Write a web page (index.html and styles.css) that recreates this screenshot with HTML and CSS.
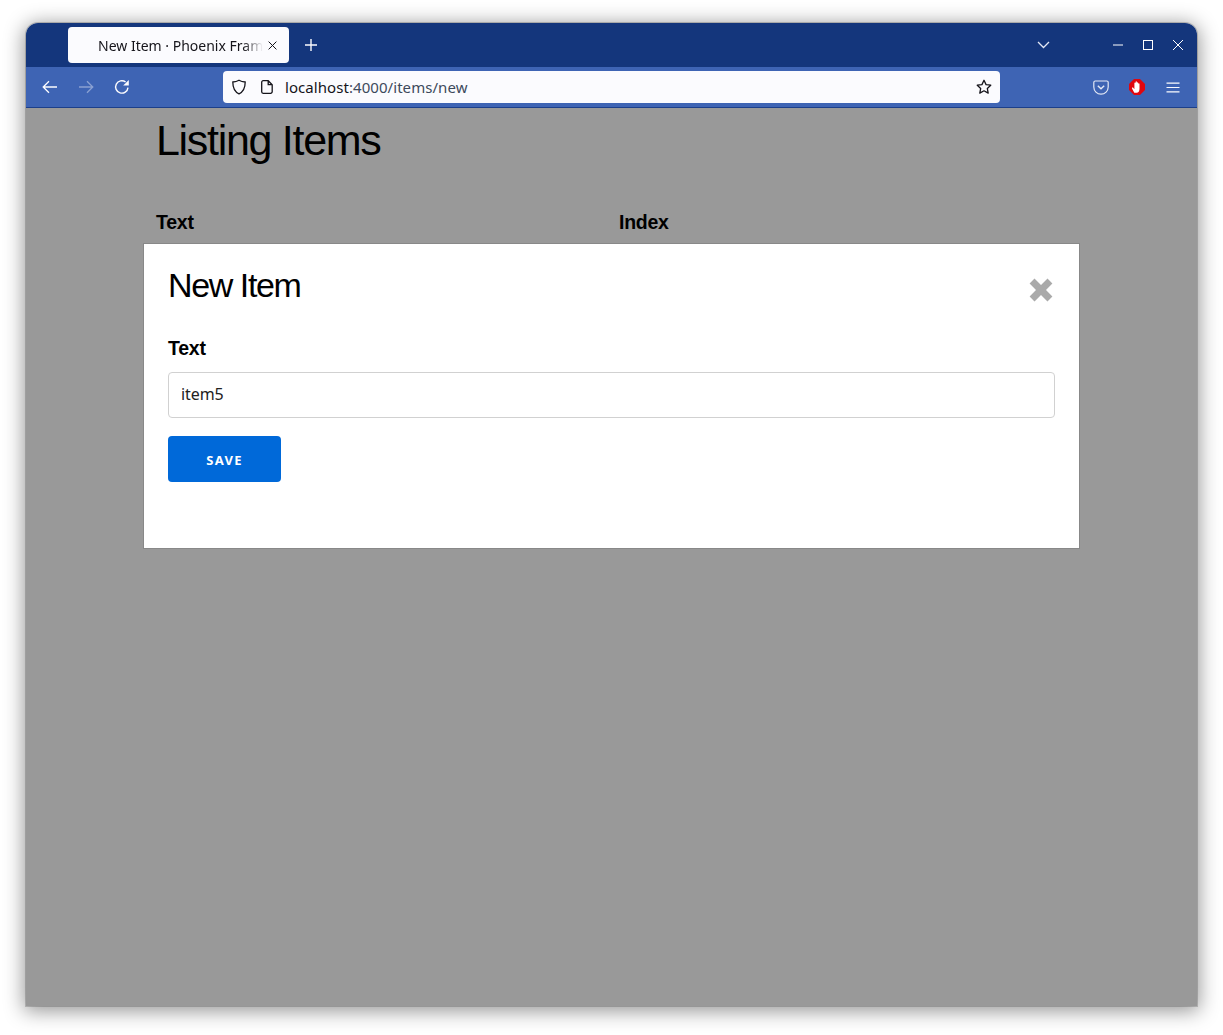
FILE: index.html
```html
<!DOCTYPE html>
<html lang="en">
<head>
<meta charset="utf-8">
<title>New Item · Phoenix Framework</title>
<link rel="stylesheet" href="styles.css">
</head>
<body>
<div class="window">
  <div class="titlebar">
    <div class="tab">
      <span class="tab-title">New Item · Phoenix Framework</span>
      <svg class="tab-close" width="9" height="9" viewBox="0 0 9 9"><path d="M.6 .6l7.800 7.800M8.400 .6l-7.800 7.800" stroke="#15141a" stroke-width="1" fill="none"/></svg>
    </div>
    <svg class="new-tab" width="12" height="12" viewBox="0 0 12 12"><path d="M6 0v12M0 6h12" stroke="#fbfbfe" stroke-width="1.4" fill="none"/></svg>
    <div class="title-spacer"></div>
    <svg class="list-tabs" width="13" height="8" viewBox="0 0 13 8"><path d="M1 1l5.500 5.500L12 1" stroke="#e3e8f5" stroke-width="1.300" fill="none"/></svg>
    <div class="win-controls">
      <svg width="10" height="2" viewBox="0 0 10 2"><path d="M0 1h10" stroke="#fff" stroke-width="1"/></svg>
      <svg width="10" height="10" viewBox="0 0 10 10"><rect x=".5" y=".5" width="9" height="9" stroke="#fff" fill="none"/></svg>
      <svg width="10" height="10" viewBox="0 0 10 10"><path d="M0 0l10 10M10 0L0 10" stroke="#fff" fill="none"/></svg>
    </div>
  </div>
  <div class="toolbar">
    <div class="nav">
      <svg width="16" height="14" viewBox="0 0 16 14"><path d="M15 7H1.500M7 1.200L1.200 7 7 12.800" stroke="#fbfbfe" stroke-width="1.300" fill="none"/></svg>
      <svg class="nav-off" width="16" height="14" viewBox="0 0 16 14"><path d="M1 7h13.500M9 1.200L14.800 7 9 12.800" stroke="#fbfbfe" stroke-width="1.300" fill="none"/></svg>
      <svg width="16" height="16" viewBox="0 0 16 16"><path d="M14 8.600A6.200 6.200 0 1 1 11.600 3" stroke="#fbfbfe" stroke-width="1.400" fill="none"/><path d="M14.800 1v5.600H9.200z" fill="#fbfbfe"/></svg>
    </div>
    <div class="urlbar">
      <svg class="shield" width="16" height="16" viewBox="0 0 16 16"><path d="M8 1.200c2 1.100 4 1.600 6.200 1.800 0 5.500-1.500 9.700-6.200 11.800C3.300 12.700 1.800 8.500 1.800 3 4 2.800 6 2.300 8 1.200z" stroke="#15141a" stroke-width="1.300" fill="none"/></svg>
      <svg class="page" width="12" height="14" viewBox="0 0 12 14"><path d="M2.200 .7h5l4 4v7a1.600 1.600 0 0 1-1.600 1.600H2.200A1.600 1.600 0 0 1 .7 11.700V2.200A1.500 1.500 0 0 1 2.200 .7zM7.200 .7v4h4" stroke="#15141a" stroke-width="1.300" fill="none"/></svg>
      <span class="url"><span class="host">localhost</span>:4000/items/new</span>
      <svg class="star" width="16" height="16" viewBox="0 0 16 16"><path d="M8 1.300l2.050 4.300 4.700.6-3.450 3.250.9 4.650L8 11.800l-4.200 2.300.9-4.650L1.250 6.200l4.700-.6z" stroke="#15141a" stroke-width="1.300" stroke-linejoin="round" fill="none"/></svg>
    </div>
    <div class="tools">
      <svg width="16" height="15" viewBox="0 0 16 15"><path d="M2.200 1h11.600A1.400 1.400 0 0 1 15.200 2.400V7a7.200 7.200 0 0 1-14.400 0V2.400A1.400 1.400 0 0 1 2.200 1z" stroke="#e3e8f5" stroke-width="1.200" fill="none"/><path d="M4.800 5.700L8 8.800l3.200-3.100" stroke="#e3e8f5" stroke-width="1.400" fill="none"/></svg>
      <svg width="16" height="16" viewBox="0 0 16 16"><path d="M5 0h6l5 5v6l-5 5H5l-5-5V5z" fill="#e0060f"/><path d="M5.300 13.800L3 9.500c-.4-.8.600-1.400 1.200-.7l1.200 1.500V4.200c0-.9 1.200-.9 1.200 0V2.900c0-.9 1.300-.9 1.300 0v1c0-.9 1.300-.9 1.300 0v1c0-.8 1.300-.8 1.300 0v4.800c0 2.300-1 4.100-2.900 4.100H7c-.8 0-1.300-.1-1.700 0z" fill="#fff"/></svg>
      <svg width="16" height="11" viewBox="0 0 16 11"><path d="M1.500 1.100h13M1.500 5.500h13M1.500 9.900h13" stroke="#fbfbfe" stroke-width="1.200"/></svg>
    </div>
  </div>
  <div class="viewport">
    <main class="page-content">
      <h1 class="page-title">Listing Items</h1>
      <div class="table-head">
        <span>Text</span>
        <span>Index</span>
      </div>
    </main>
    <div class="overlay">
      <section class="modal">
        <svg class="modal-close" width="24" height="24" viewBox="0 0 24 24"><path d="M5.500 0.600L12 7l6.500-6.400 4.900 4.900L17 12l6.400 6.500-4.900 4.900L12 17l-6.500 6.400-4.900-4.900L7 12 .6 5.500z" fill="#aaa"/></svg>
        <h2 class="modal-title">New Item</h2>
        <form class="form">
          <label class="label" for="text">Text</label>
          <input class="input" id="text" type="text" value="item5">
          <button class="save" type="button">SAVE</button>
        </form>
      </section>
    </div>
  </div>
</div>
</body>
</html>
```
FILE: styles.css
```css
* { box-sizing: border-box; }
html, body { margin: 0; height: 100%; background: #fff; }
body { padding: 23px 26px 29px; overflow: hidden; }
.window {
  height: 100%;
  display: flex;
  flex-direction: column;
  border-radius: 12px 12px 0 0;
  overflow: hidden;
  box-shadow: 0 0 0 1px rgba(0,0,0,.18), 0 3px 20px 2px rgba(0,0,0,.42);
  font-family: "Noto Sans", sans-serif;
}
.titlebar {
  height: 44px;
  flex: none;
  display: flex;
  align-items: center;
  background: #14367c;
  padding: 4px 0 0 42px;
}
.tab {
  width: 221px;
  height: 36px;
  background: #fbfbfe;
  border-radius: 4px;
  display: flex;
  align-items: center;
  padding: 0 12px 0 30px;
  gap: 5px;
  margin-top: -4px;
}
.tab-title {
  flex: 1;
  min-width: 0;
  font-size: 14px;
  color: #15141a;
  white-space: nowrap;
  overflow: hidden;
  -webkit-mask-image: linear-gradient(to right, #000 88%, transparent);
  mask-image: linear-gradient(to right, #000 88%, transparent);
}
.tab-close { flex: none; }
.new-tab { margin: -4px 0 0 16px; flex: none; }
.title-spacer { flex: 1; }
.list-tabs { margin: -4px 0 0 0; flex: none; }
.win-controls {
  display: flex;
  align-items: center;
  gap: 20px;
  margin: -4px 14px 0 63px;
}
.toolbar {
  height: 41px;
  flex: none;
  display: flex;
  align-items: center;
  background: #3e64b4;
  border-bottom: 1px solid #1c3f8a;
  padding: 0 16px;
}
.nav { display: flex; align-items: center; gap: 20px; width: 181px; }
.nav-off { opacity: .4; }
.urlbar {
  width: 777px;
  height: 32px;
  background: #fbfbfe;
  border-radius: 4px;
  display: flex;
  align-items: center;
  padding: 0 8px;
  margin-top: -1px;
}
.shield { flex: none; }
.page { flex: none; margin-left: 14px; }
.url { flex: 1; margin-left: 12px; font-size: 15px; letter-spacing: .06px; color: #3d4a5c; white-space: nowrap; }
.host { color: #15141a; }
.tools {
  display: flex;
  align-items: center;
  justify-content: flex-end;
  gap: 20px;
  flex: 1;
}
.viewport { flex: 1; position: relative; background: #fff; }
.page-content { padding: 6px 130px; font-family: "Liberation Sans", Arial, sans-serif; }
.page-title {
  margin: 0;
  font-size: 43px;
  line-height: 52px;
  font-weight: 400;
  letter-spacing: -1.300px;
  color: #000;
}
.table-head {
  display: grid;
  grid-template-columns: 463px 1fr;
  margin-top: 42px;
  font-size: 19.500px;
  font-weight: 700;
  line-height: 28px;
  letter-spacing: -.25px;
  color: #000;
}
.overlay { position: absolute; inset: 0; background: rgba(0,0,0,.4); }
.modal {
  position: absolute;
  left: 117px;
  top: 135px;
  width: 937px;
  height: 306px;
  background: #fff;
  border: 1px solid #888;
  padding: 20px 24px;
  font-family: "Liberation Sans", Arial, sans-serif;
}
.modal-close { position: absolute; right: 26px; top: 34px; }
.modal-title {
  margin: 0;
  font-size: 34px;
  line-height: 42px;
  font-weight: 400;
  letter-spacing: -1.400px;
  color: #000;
}
.form { display: flex; flex-direction: column; align-items: flex-start; margin-top: 30px; }
.label { font-size: 19.500px; font-weight: 700; line-height: 24px; letter-spacing: -.25px; color: #000; }
.input {
  width: 887px;
  height: 46px;
  margin-top: 12px;
  padding: 0 12px 2px;
  border: 1px solid #d1d1d1;
  border-radius: 4px;
  font: 16px "Noto Sans", sans-serif;
  letter-spacing: -.1px;
  color: #212121;
  background: #fff;
}
.save {
  width: 113px;
  height: 46px;
  margin-top: 18px;
  padding: 2px 0 0;
  border: 0;
  border-radius: 4px;
  background: #0069d9;
  color: #fff;
  font: 700 13px "Noto Sans", sans-serif;
  letter-spacing: 1.300px;
}
```
